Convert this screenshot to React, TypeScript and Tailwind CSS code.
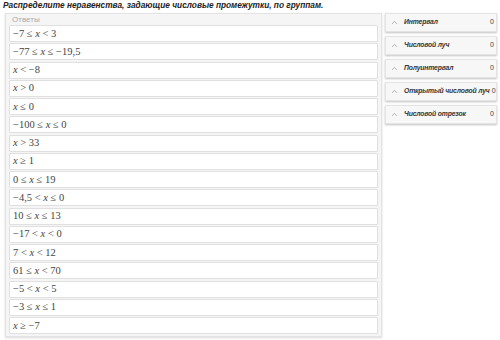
import { ChevronUp } from "lucide-react";

const answers: string[][] = [
  ["−7 ≤ ", "x", " < 3"],
  ["−77 ≤ ", "x", " ≤ −19,5"],
  ["", "x", " < −8"],
  ["", "x", " > 0"],
  ["", "x", " ≤ 0"],
  ["−100 ≤ ", "x", " ≤ 0"],
  ["", "x", " > 33"],
  ["", "x", " ≥ 1"],
  ["0 ≤ ", "x", " ≤ 19"],
  ["−4,5 < ", "x", " ≤ 0"],
  ["10 ≤ ", "x", " ≤ 13"],
  ["−17 < ", "x", " < 0"],
  ["7 < ", "x", " < 12"],
  ["61 ≤ ", "x", " < 70"],
  ["−5 < ", "x", " < 5"],
  ["−3 ≤ ", "x", " ≤ 1"],
  ["", "x", " ≥ −7"],
];

const groups = [
  "Интервал",
  "Числовой луч",
  "Полуинтервал",
  "Открытый числовой луч",
  "Числовой отрезок",
];

export default function App() {
  return (
    <div className="w-[500px] h-[340px] bg-white overflow-hidden font-['Liberation_Sans',sans-serif]">
      <div className="pl-[3px] h-[12px] text-[8.3px] leading-[10px] font-bold italic text-[#222]">
        Распределите неравенства, задающие числовые промежутки, по группам.
      </div>
      <div className="flex items-start">
        <div className="ml-[5px] mt-px w-[377px] h-[324px] border border-[#e3e3e3] bg-[#f5f5f5] px-[3px] shadow-[0_1px_2px_rgba(0,0,0,0.15)]">
          <div className="h-[11px] pl-[3px] text-[8px] leading-[11px] text-[#aaa]">
            Ответы
          </div>
          <div className="flex flex-col gap-[1.25px]">
            {answers.map((a, i) => (
              <div
                key={i}
                className="h-[17px] bg-white border border-[#e0e0e0] rounded-[1px] flex items-center pl-[3px] font-['Liberation_Serif',serif] text-[10.5px] text-[#444]"
              >
                <span className="whitespace-pre">
                  {a[0]}
                  <i>{a[1]}</i>
                  {a[2]}
                </span>
              </div>
            ))}
          </div>
        </div>
        <div className="ml-[3px] w-[112px] flex flex-col gap-[4px] pt-[1px]">
          {groups.map((g) => (
            <div
              key={g}
              className="h-[19px] bg-[#f7f7f7] border border-[#e4e4e4] shadow-[0_1px_2px_rgba(0,0,0,0.25)] flex items-center pl-[4px] pr-[2px]"
            >
              <ChevronUp size={9} strokeWidth={2} className="text-[#999] shrink-0" />
              <span className="ml-[5px] text-[6.8px] tracking-[-0.15px] font-bold italic text-[#333] whitespace-nowrap">
                {g}
              </span>
              <span className="ml-auto pl-[2px] text-[7px] text-[#444]">0</span>
            </div>
          ))}
        </div>
      </div>
    </div>
  );
}
